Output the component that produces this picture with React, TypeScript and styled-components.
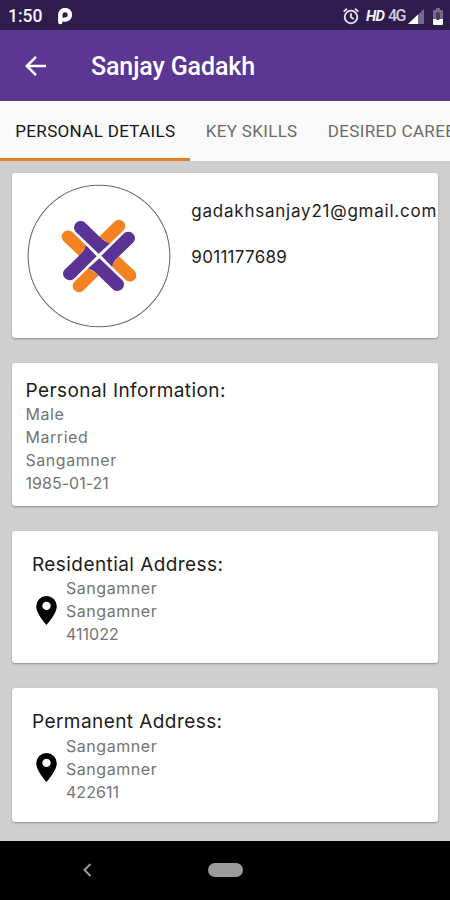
import React from 'react';
import styled, { createGlobalStyle } from 'styled-components';

const GlobalStyle = createGlobalStyle`
  * { box-sizing: border-box; }
  body { margin: 0; background: #cfcfcf; }
`;

const Screen = styled.div`
  width: 450px;
  height: 900px;
  display: flex;
  flex-direction: column;
  overflow: hidden;
  background: #cfcfcf;
  font-family: Roboto, sans-serif;
`;

const StatusBar = styled.header`
  height: 30px;
  flex: none;
  display: flex;
  align-items: center;
  padding: 2px 7px 0 8px;
  background: #2e1c4c;
  color: #f6f2fa;
`;

const Clock = styled.span`
  width: 50px;
  font-size: 17.5px;
  font-weight: 500;
  line-height: 20px;
`;

const StatusIcons = styled.div`
  margin-left: auto;
  display: flex;
  align-items: center;
`;

const HdLabel = styled.span`
  width: 22px;
  margin-left: 6px;
  font-size: 15px;
  font-weight: 700;
  font-style: italic;
  line-height: 20px;
  letter-spacing: -0.8px;
`;

const NetworkLabel = styled.span`
  width: 20px;
  color: #d5cedf;
  font-size: 16px;
  font-weight: 500;
  line-height: 20px;
  letter-spacing: -1.7px;
`;

const AppBar = styled.div`
  height: 71px;
  flex: none;
  display: flex;
  align-items: center;
  padding-left: 24px;
  background: #5b3693;
  color: #fff;
`;

const Title = styled.h1`
  margin: 2px 0 0 43px;
  font-size: 25px;
  font-weight: 500;
  line-height: 30px;
  letter-spacing: -0.12px;
`;

const Tabs = styled.nav`
  height: 60px;
  flex: none;
  display: flex;
  background: #fafafa;
`;

const Tab = styled.div<{ $active?: boolean }>`
  flex: none;
  height: 60px;
  padding: 1px 15px 0 15.3px;
  border-bottom: 3px solid ${p => (p.$active ? '#e4812b' : 'transparent')};
  color: ${p => (p.$active ? '#161616' : '#6a6a6a')};
  font-size: 17px;
  font-weight: 400;
  line-height: 59px;
  letter-spacing: 0.33px;
  white-space: nowrap;
`;

const Content = styled.main`
  flex: 1;
  display: flex;
  flex-direction: column;
  gap: 25px;
  padding: 12px 11.7px 0 12.3px;
  font-family: Inter, sans-serif;
`;

const Card = styled.section<{ $height: number }>`
  height: ${p => p.$height}px;
  flex: none;
  background: #fff;
  border-radius: 3px;
  box-shadow: 0 1px 2px rgba(0, 0, 0, 0.32);
`;

const ProfileCard = styled(Card)`
  display: flex;
  padding: 10.5px 0 0 15px;
`;

const Contact = styled.div`
  margin: 15px 0 0 20px;
  color: #1c1c1c;
  font-size: 17px;
  line-height: 24px;
  white-space: nowrap;
`;

const Email = styled.div`
  letter-spacing: 0.77px;
`;

const Phone = styled.div`
  margin-top: 22px;
  letter-spacing: 0.3px;
`;

const InfoCard = styled(Card)`
  padding: 15px 13.2px;
`;

const AddressCard = styled(Card)`
  padding: 21px 19.7px;
`;

const Heading = styled.h2`
  margin: 0;
  color: #1c1c1c;
  font-size: 19px;
  font-weight: 400;
  line-height: 25px;
  letter-spacing: 0.43px;
  white-space: nowrap;
`;

const Lines = styled.div`
  padding-top: 0.4px;
  color: #747474;
  font-size: 16px;
  line-height: 22.9px;
  letter-spacing: 0.55px;
`;

const Digits = styled.div`
  letter-spacing: 0.03px;
`;

const AddressBody = styled.div`
  display: flex;
  align-items: center;
  gap: 9px;
  padding-left: 4px;
`;

const NavBar = styled.footer`
  height: 59.5px;
  flex: none;
  display: grid;
  grid-template-columns: 174px 103px 1fr;
  align-items: center;
  justify-items: center;
  background: #000;
`;

const HomePill = styled.div`
  width: 35px;
  height: 14px;
  border-radius: 7px;
  background: #9c9c9c;
`;

const ParkIcon = () => (
  <svg width="14" height="17" viewBox="0 0 14 17">
    <path d="M2.3 14V6.8a4.8 4.8 0 1 1 4.8 4.8H6" fill="none" stroke="#fff" strokeWidth="4.4" strokeLinecap="round" />
  </svg>
);

const AlarmIcon = () => (
  <svg width="18" height="18" viewBox="0 0 18 18" fill="none" stroke="#e9e4ef" strokeWidth="1.8">
    <circle cx="9" cy="10" r="6.3" />
    <path d="M9 6.3v4l2.8 1.8M1.6 4.6 5 1.7M16.4 4.6 13 1.7" />
  </svg>
);

const SignalIcon = () => (
  <svg width="16" height="15" viewBox="0 0 16 15">
    <path d="M0 15 16 0v15Z" fill="#75688a" />
    <path d="M0 15 10 5.6V15Z" fill="#fff" />
  </svg>
);

const Battery = styled.svg`
  margin-left: 9px;
`;

const BatteryIcon = () => (
  <Battery width="10" height="17" viewBox="0 0 10 17">
    <path d="M3 0h4v2h2.2q.8 0 .8.8V11H0V2.8q0-.8.8-.8H3Z" fill="#75688a" />
    <path d="M3 4.5h4V11H3Z" fill="#493a60" />
    <path d="M0 11h3l2 1.2L7 11h3v5q0 1-1 1H1q-1 0-1-1Z" fill="#fff" />
  </Battery>
);

const BackArrow = () => (
  <svg width="24" height="22" viewBox="0 0 24 22" fill="none" stroke="#fff" strokeWidth="2.5">
    <path d="M22 11H3M12 1.8 2.8 11 12 20.2" />
  </svg>
);

const LogoArm = ({ turn }: { turn: number }) => (
  <g transform={`rotate(${turn})`}>
    <path d="M46-106A19 19 0 0 1 74-80L32-38 0-59Z" fill="#f58220" />
    <path d="M-71-76A20 20 0 0 1-43-104L1-60Q16-44 33-39L-1-7Z" fill="#5b3394" />
  </g>
);

const Avatar = () => (
  <svg width="144" height="144" viewBox="-216 -216 432 432">
    <circle r="212.5" fill="#fff" stroke="#6b6b6b" strokeWidth="3.2" />
    <g transform="scale(1 .97)">
      {[0, 90, 180, 270].map(turn => (
        <LogoArm key={turn} turn={turn} />
      ))}
    </g>
  </svg>
);

const PinSvg = styled.svg`
  margin-bottom: 2px;
`;

const Pin = () => (
  <PinSvg width="21" height="29" viewBox="0 0 21 29">
    <path
      fillRule="evenodd"
      d="M10.5 0A10.3 10.3 0 0 0 .2 10.3C.2 18 10.5 29 10.5 29S20.8 18 20.8 10.3A10.3 10.3 0 0 0 10.5 0Zm0 5.7a4.2 4.2 0 1 1 0 8.4 4.2 4.2 0 0 1 0-8.4Z"
    />
  </PinSvg>
);

const Chevron = () => (
  <svg width="9" height="14" viewBox="0 0 9 14" fill="none" stroke="#9c9c9c" strokeWidth="2">
    <path d="M7.5 1 1.5 7l6 6" />
  </svg>
);

interface AddressProps {
  title: string;
  lines: string[];
  pin: string;
  height: number;
}

const Address = ({ title, lines, pin, height }: AddressProps) => (
  <AddressCard $height={height}>
    <Heading>{title}</Heading>
    <AddressBody>
      <Pin />
      <Lines>
        {lines.map((line, i) => (
          <div key={i}>{line}</div>
        ))}
        <Digits>{pin}</Digits>
      </Lines>
    </AddressBody>
  </AddressCard>
);

export default function App() {
  return (
    <Screen>
      <GlobalStyle />
      <StatusBar>
        <Clock>1:50</Clock>
        <ParkIcon />
        <StatusIcons>
          <AlarmIcon />
          <HdLabel>HD</HdLabel>
          <NetworkLabel>4G</NetworkLabel>
          <SignalIcon />
          <BatteryIcon />
        </StatusIcons>
      </StatusBar>
      <AppBar>
        <BackArrow />
        <Title>Sanjay Gadakh</Title>
      </AppBar>
      <Tabs>
        <Tab $active>PERSONAL DETAILS</Tab>
        <Tab>KEY SKILLS</Tab>
        <Tab>DESIRED CAREER</Tab>
      </Tabs>
      <Content>
        <ProfileCard $height={165}>
          <Avatar />
          <Contact>
            <Email>gadakhsanjay21@gmail.com</Email>
            <Phone>9011177689</Phone>
          </Contact>
        </ProfileCard>
        <InfoCard $height={143}>
          <Heading>Personal Information:</Heading>
          <Lines>
            <div>Male</div>
            <div>Married</div>
            <div>Sangamner</div>
            <Digits>1985-01-21</Digits>
          </Lines>
        </InfoCard>
        <Address title="Residential Address:" lines={['Sangamner', 'Sangamner']} pin="411022" height={132.3} />
        <Address title="Permanent Address:" lines={['Sangamner', 'Sangamner']} pin="422611" height={133.3} />
      </Content>
      <NavBar>
        <Chevron />
        <HomePill />
      </NavBar>
    </Screen>
  );
}
